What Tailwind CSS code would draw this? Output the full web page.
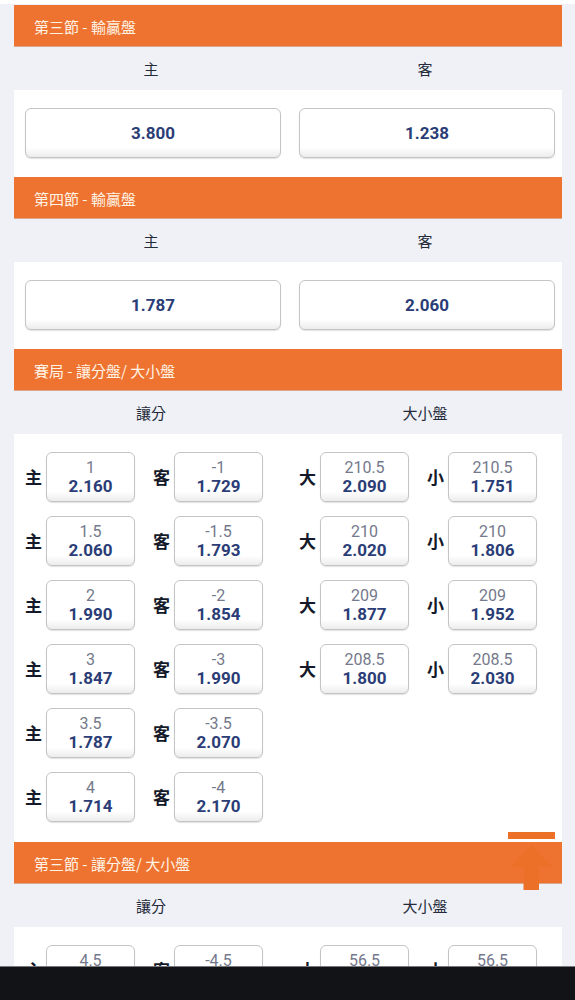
<!DOCTYPE html>
<html lang="zh-Hant">
<head>
  <meta charset="UTF-8">
  <meta name="viewport" content="width=device-width, initial-scale=1.0">
  <title>賽局盤口</title>
  <script src="https://cdn.jsdelivr.net/npm/@tailwindcss/browser@4"></script>
</head>
<body class="h-screen flex flex-col bg-[#eff1f6] text-[#252b3b] font-['Roboto','Noto_Sans_CJK_TC',sans-serif]">
  <div class="h-1 shrink-0 bg-white"></div>
  <main id="markets" class="flex-1 min-h-0 overflow-hidden pt-px pl-3.5 pr-[13px]"></main>
  <footer class="h-[34px] shrink-0 bg-[#121317] border-t border-[#77787b]"></footer>

  <a href="#markets" aria-label="回到頂部" class="fixed right-5 bottom-[110px] text-[#ed7029]">
    <svg class="w-[47px] h-[58px]" viewBox="0 0 47 58" fill="currentColor" aria-hidden="true">
      <path d="M0 0H47V7H0ZM23.500 13L44.500 35H31V58H15.500V35H2Z"/>
    </svg>
  </a>

  <script>
    const markets = [
      { title: '第三節 - 輸贏盤', columns: ['主', '客'], odds: ['3.800', '1.238'] },
      { title: '第四節 - 輸贏盤', columns: ['主', '客'], odds: ['1.787', '2.060'] },
      {
        title: '賽局 - 讓分盤/ 大小盤',
        columns: ['讓分', '大小盤'],
        lines: [
          [
            ['主', '1', '2.160'], ['客', '-1', '1.729'],
            ['主', '1.5', '2.060'], ['客', '-1.5', '1.793'],
            ['主', '2', '1.990'], ['客', '-2', '1.854'],
            ['主', '3', '1.847'], ['客', '-3', '1.990'],
            ['主', '3.5', '1.787'], ['客', '-3.5', '2.070'],
            ['主', '4', '1.714'], ['客', '-4', '2.170'],
          ],
          [
            ['大', '210.5', '2.090'], ['小', '210.5', '1.751'],
            ['大', '210', '2.020'], ['小', '210', '1.806'],
            ['大', '209', '1.877'], ['小', '209', '1.952'],
            ['大', '208.5', '1.800'], ['小', '208.5', '2.030'],
          ],
        ],
      },
      {
        title: '第三節 - 讓分盤/ 大小盤',
        columns: ['讓分', '大小盤'],
        lines: [
          [['主', '4.5', ''], ['客', '-4.5', '']],
          [['大', '56.5', ''], ['小', '56.5', '']],
        ],
      },
    ];

    const button = (label, line, price) => `
      <button type="button" aria-label="${label} ${line} ${price}" class="flex-1 min-w-0 h-[50px] flex flex-col items-center justify-center rounded-md border border-[#c4c4c6] bg-linear-to-b from-white from-80% to-[#ececec] shadow-[0_1px_1px_rgba(0,0,0,0.12)] leading-[19px]">
        ${line ? `<span class="h-[19px] text-base leading-[19px] text-[#74798b]">${line}</span>` : ''}
        <span class="h-[19px] text-[17px] leading-[19px] font-bold text-[#2b3d76]">${price}</span>
      </button>`;

    const cell = ([label, line, price]) => `
      <div class="flex items-center pr-[18px]">
        <span class="w-[21px] pt-0.5 text-[17px] leading-6 font-bold text-[#141a29]">${label}</span>
        ${button(label, line, price)}
      </div>`;

    document.getElementById('markets').innerHTML = markets.map((m) => `
      <section>
        <h2 class="h-[42px] flex items-center px-5 pt-1 bg-[#ee7330] border-b border-[#d9a98c] font-['Noto_Sans_CJK_TC',sans-serif] text-[15px] text-[#fff3e6]">${m.title}</h2>
        <div class="h-[43px] grid grid-cols-2 items-center pt-1 text-center text-[15px]">
          ${m.columns.map((c) => `<h3>${c}</h3>`).join('')}
        </div>
        ${m.odds
          ? `<div class="grid grid-cols-2 pt-[18px] pb-[19px] bg-white">
              ${m.odds.map((price, i) => `<div class="flex pl-[11px] pr-[7px]">${button(m.columns[i], '', price)}</div>`).join('')}
            </div>`
          : `<div class="grid grid-cols-2 pt-[18px] pb-5 bg-white">
              ${m.lines.map((group) => `<div class="grid grid-cols-2 content-start gap-y-3.5 pl-[11px] pr-[7px]">${group.map(cell).join('')}</div>`).join('')}
            </div>`}
      </section>`).join('');
  </script>
</body>
</html>
